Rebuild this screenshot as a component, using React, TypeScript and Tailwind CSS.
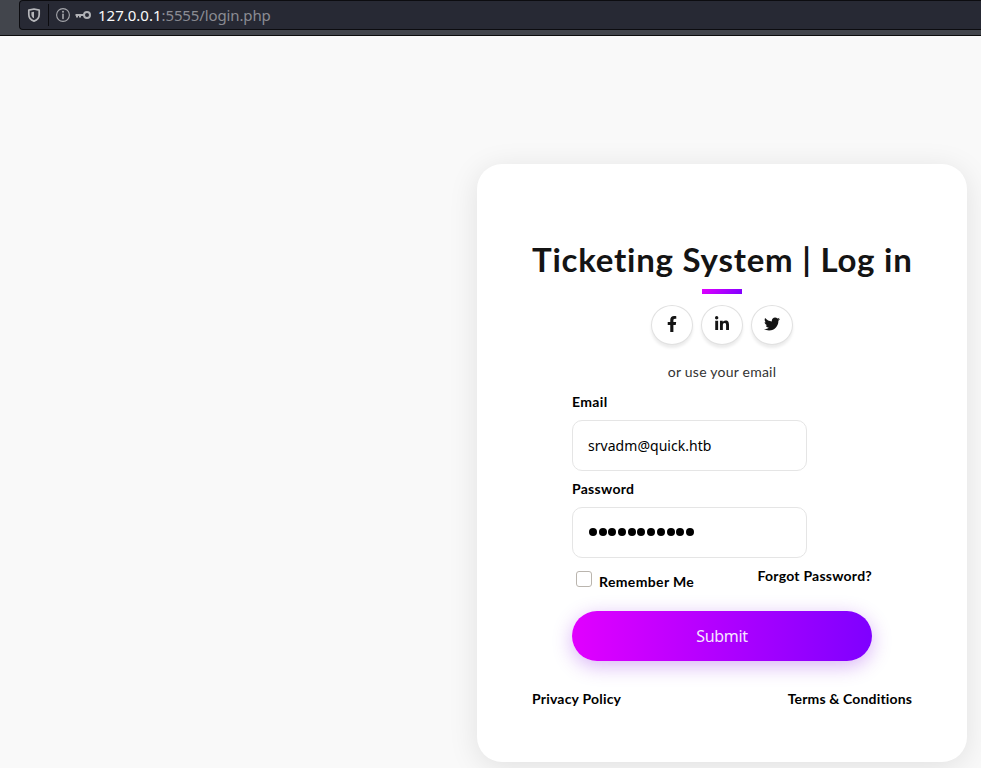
import React from "react";
import { FaFacebookF, FaLinkedinIn, FaTwitter } from "react-icons/fa";

const strong =
  "block whitespace-nowrap font-[Lato,sans-serif] text-[14px] leading-[20px] font-bold text-black";

function Social({ children }: { children: React.ReactNode }) {
  return (
    <a className="flex h-[40px] w-[42px] items-center justify-center rounded-[50%] border border-[#e1e1e1] bg-white pb-[2px] text-[16px] text-[#141414] shadow-[0_3px_3px_rgba(0,0,0,0.08)]">
      {children}
    </a>
  );
}

function AddressBar() {
  return (
    <header className="h-[36px] border-b border-[#0c0c0d] bg-[#42454c] pl-[19px]">
      <div className="flex h-[30px] items-center rounded-l-[4px] border border-r-0 border-[#0c0c10] bg-[#272934]">
        <svg className="ml-[7px] h-[14px] w-[14px]" viewBox="0 0 14 14" fill="none">
          <path d="M7 1 12.2 2.2V6.5C12.2 9.8 9.8 12.2 7 13.1 4.200 12.200 1.800 9.800 1.800 6.500V2.200Z" stroke="#b5b6ba" strokeWidth="1.7" strokeLinejoin="round" />
          <path d="M7 3.700V10.300C5.300 9.500 4.400 8.300 4.400 6.400V4.200Z" fill="#b5b6ba" />
        </svg>
        <div className="ml-[7px] h-[22px] w-px bg-[#0c0c10]" />
        <svg className="ml-[7px] h-[14px] w-[14px]" viewBox="0 0 14 14" fill="none">
          <circle cx="7" cy="7" r="6.400" stroke="#a5a6ab" strokeWidth="1.100" />
          <path d="M7 6.200V10.500" stroke="#a5a6ab" strokeWidth="1.600" strokeLinecap="round" />
          <circle cx="7" cy="3.800" r="1" fill="#a5a6ab" />
        </svg>
        <svg className="ml-[5px] h-[10px] w-[16px]" viewBox="0 0 16 10" fill="none">
          <circle cx="12" cy="5" r="3" stroke="#b1b2b6" strokeWidth="2" />
          <path d="M9 5H0.500M2 5V7.500M5 5V7.500" stroke="#b1b2b6" strokeWidth="2" />
        </svg>
        <span className="ml-[7px] whitespace-nowrap font-['Noto_Sans',sans-serif] text-[15px] leading-[20px] tracking-[-0.12px] text-[#8b8c93]">
          <span className="tracking-normal text-[#f9f9fa]">127.0.0.1</span>:5555/login.php
        </span>
      </div>
    </header>
  );
}

export default function App() {
  return (
    <div className="h-[768px] w-[981px] overflow-hidden bg-[#f9f9f9]">
      <AddressBar />
      <main className="flex justify-end pt-[128px] pr-[14px]">
        <section className="flex h-[598px] w-[490px] flex-col rounded-[25px] bg-white px-[55px] pt-[76px] shadow-[0_5px_30px_rgba(0,0,0,0.1)]">
          <h1 className="h-[49px] whitespace-nowrap font-[Lato,sans-serif] text-[33px] leading-[39px] font-bold tracking-[0.77px] text-[#141414]">
            Ticketing System | Log in
          </h1>
          <div className="h-[5px] w-[40px] self-center bg-[linear-gradient(135deg,#e100ff,#7f00ff)]" />
          <div className="mt-[11px] flex justify-center gap-[8px]">
            <Social><FaFacebookF /></Social>
            <Social><FaLinkedinIn /></Social>
            <Social><FaTwitter /></Social>
          </div>
          <p className="mt-[17px] h-[20px] self-center whitespace-nowrap font-[Lato,sans-serif] text-[14px] leading-[20px] tracking-[0.23px] text-[#333]">
            or use your email
          </p>
          <form className="mx-[40px] mt-[10px] flex flex-col">
            <label className={strong + " tracking-[0.35px]"}>Email</label>
            <div className="mt-[8px] flex h-[51px] w-[235px] items-center rounded-[10px] border border-[#e5e5e5] px-[15px]">
              <span className="whitespace-nowrap font-['Noto_Sans',sans-serif] text-[14px] tracking-[0.04px] text-black">srvadm@quick.htb</span>
            </div>
            <label className={strong + " mt-[8px] tracking-[0.28px]"}>Password</label>
            <div className="mt-[8px] flex h-[51px] w-[235px] items-center gap-[1.700px] rounded-[10px] border border-[#e5e5e5] px-[16px] pb-px">
              {Array.from({ length: 11 }, (_, i) => (
                <i key={i} className="h-[8px] w-[8px] rounded-full bg-black" />
              ))}
            </div>
            <div className="flex h-[53px] items-start justify-between pl-[4px]">
              <div className="flex">
                <i className="mt-[13px] h-[16px] w-[16px] rounded-[3px] border border-[#bab5ae] bg-white" />
                <label className={strong + " mt-[14px] ml-[7px] tracking-[0.36px]"}>Remember Me</label>
              </div>
              <a className={strong + " mt-[8px] tracking-[0.24px]"}>Forgot Password?</a>
            </div>
            <button type="button" className="h-[50px] w-[300px] rounded-[25px] bg-[linear-gradient(90deg,#e100ff,#7f00ff)] font-['Noto_Sans',sans-serif] text-[16px] tracking-[-0.3px] text-[#f5e6ff] shadow-[0_5px_20px_rgba(127,0,225,0.3)]">
              Submit
            </button>
          </form>
          <footer className="mt-[28px] flex justify-between">
            <a className={strong + " tracking-[0.2px]"}>Privacy Policy</a>
            <a className={strong + " tracking-[0.15px]"}>Terms &amp; Conditions</a>
          </footer>
        </section>
      </main>
    </div>
  );
}
